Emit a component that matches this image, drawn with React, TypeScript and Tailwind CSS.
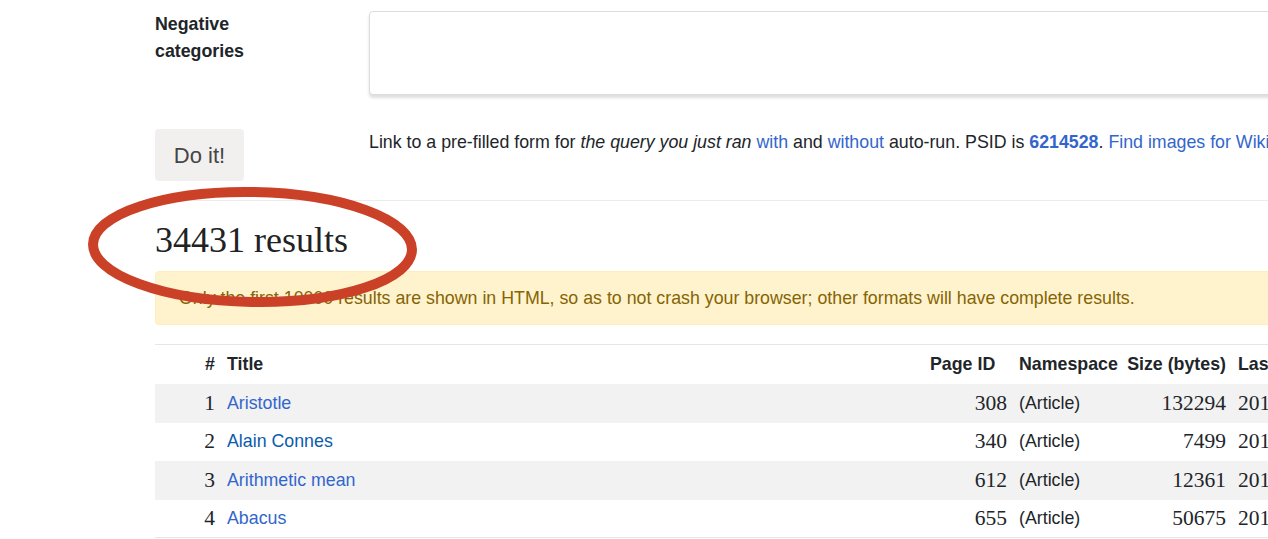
const rows = [
  { n: 1, title: "Aristotle", id: 308, size: 132294, last: "20170519063128", visited: false },
  { n: 2, title: "Alain Connes", id: 340, size: 7499, last: "20170504132207", visited: true },
  { n: 3, title: "Arithmetic mean", id: 612, size: 12361, last: "20170516184512", visited: false },
  { n: 4, title: "Abacus", id: 655, size: 50675, last: "20170520102938", visited: false },
];

const serif = "font-['Liberation_Serif','Times_New_Roman',serif]";

export default function App() {
  return (
    <div className="relative w-[1268px] h-[539px] overflow-hidden bg-white font-['Liberation_Sans',Arial,sans-serif] text-[17.8px] text-[#212529]">
      <div className="pl-[155px] w-[1500px]">
        {/* negative categories row */}
        <div className="flex pt-[10.5px]">
          <div className="w-[214px] font-bold leading-[27px]">
            Negative
            <br />
            categories
          </div>
          <div className="w-[1000px] h-[84px] mt-[0.5px] border border-[#dcdcdc] rounded-[4px] bg-white shadow-[0_3px_3px_rgba(0,0,0,0.13)]" />
        </div>

        {/* submit row */}
        <div className="flex items-start mt-[34px]">
          <button className="w-[89px] h-[52px] rounded-[4px] bg-[#f1f0ef] text-[22px] text-[#454545]">Do it!</button>
          <div className="ml-[125px] leading-[27px] -mt-[0.5px] whitespace-nowrap">
            Link to a pre-filled form for <i>the query you just ran</i>{" "}
            <a className="text-[#3366cc]">with</a> and <a className="text-[#3366cc]">without</a> auto-run. PSID is{" "}
            <b className="text-[#3366cc]">6214528</b>. <a className="text-[#3366cc]">Find images for Wikidata items</a>
          </div>
        </div>

        <div className="mt-[19px] border-t border-[#ececec]" />

        <h2 className={`${serif} text-[36px] leading-[43px] mt-[17.5px] text-[#222]`}>34431 results</h2>

        <div className="mt-[9.5px] h-[54px] flex items-center pl-[23px] bg-[#fff3cd] border border-[#ffeeba] rounded-[4px] text-[#856404]">
          Only the first 10000 results are shown in HTML, so as to not crash your browser; other formats will have complete results.
        </div>

        <table className="mt-[19px] border-collapse table-fixed w-[1300px]">
          <colgroup>
            <col className="w-[66px]" />
            <col className="w-[703px]" />
            <col className="w-[89px]" />
            <col className="w-[108px]" />
            <col className="w-[111px]" />
            <col className="w-[223px]" />
          </colgroup>
          <thead>
            <tr className="h-[39px] border-t border-[#e6e6e6] font-bold">
              <th className="text-right px-[6px]">#</th>
              <th className="text-left px-[6px]">Title</th>
              <th className="text-right pl-[6px] pr-[18px] whitespace-nowrap">Page ID</th>
              <th className="text-left px-[6px]">Namespace</th>
              <th className="text-right px-[6px] whitespace-nowrap">Size (bytes)</th>
              <th className="text-left px-[6px] whitespace-nowrap">Last change</th>
            </tr>
          </thead>
          <tbody>
            {rows.map((r, i) => (
              <tr
                key={r.n}
                className={`${i % 2 === 0 ? "bg-[#f2f2f2] h-[39px]" : "bg-white h-[38px]"} ${i === rows.length - 1 ? "border-b border-[#e6e6e6]" : ""}`}
              >
                <td className={`${serif} text-[21.5px] text-right px-[6px]`}>{r.n}</td>
                <td className="px-[6px]">
                  <a className={r.visited ? "text-[#0b5cad]" : "text-[#3366cc]"}>{r.title}</a>
                </td>
                <td className={`${serif} text-[21.5px] text-right px-[6px]`}>{r.id}</td>
                <td className="px-[6px]">(Article)</td>
                <td className={`${serif} text-[21.5px] text-right px-[6px]`}>{r.size}</td>
                <td className={`${serif} text-[21.5px] px-[6px]`}>{r.last}</td>
              </tr>
            ))}
          </tbody>
        </table>
      </div>

      {/* red annotation ring */}
      <svg className="absolute left-0 top-0 pointer-events-none" width="1268" height="539">
        <ellipse cx="252.5" cy="247" rx="159.5" ry="55" fill="none" stroke="#cb4128" strokeWidth="10" transform="rotate(1 252.5 247)" />
      </svg>
    </div>
  );
}
